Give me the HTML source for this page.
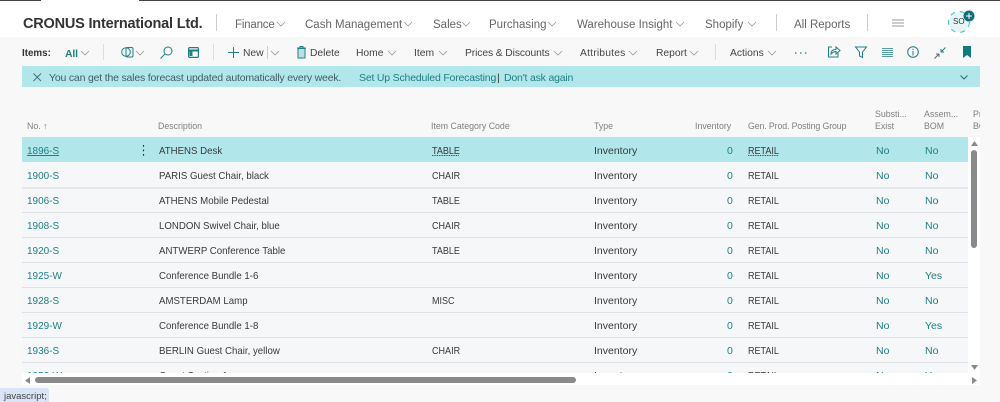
<!DOCTYPE html>
<html><head><meta charset="utf-8"><style>
html,body{margin:0;padding:0;width:1000px;height:402px;overflow:hidden;background:#f8f8f9}
body{position:relative;font-family:"Liberation Sans",sans-serif;font-size:10.5px;color:#3b3a39;filter:blur(.25px)}
.t{position:absolute;white-space:nowrap;line-height:14px;height:14px;margin-top:1px}
.a{position:absolute}
.a .t{margin-top:0}
#rows .t{margin-top:1px}
.g{color:#1f7f82}
.h{color:#808080;font-size:8.8px;margin-top:0}
.n{color:#666;font-size:11.5px}
.b{color:#444;font-size:10.3px}
.k{letter-spacing:-.19px;font-size:10.5px}
.l{position:absolute;left:22px;width:946px;height:1px;background:#dfe1e5}
svg.a{overflow:visible;fill:none}
#tb{position:absolute;left:22px;top:137px;width:946px;height:236px;overflow:hidden;background:#f6f7f9}
#rows{position:absolute;left:-22px;top:-137px;width:1000px;height:402px}
#rows .t[style*="left:159px"]{transform:scaleX(.92);transform-origin:0 50%}
#rows .t[style*="left:432px"],#rows .t[style*="left:748px"]{transform:scaleX(.86);transform-origin:0 50%}
#rows .t[style*="left:27px"]{transform:scaleX(.95);transform-origin:0 50%}
</style></head><body>
<svg width="0" height="0" style="position:absolute"><defs><polyline id="c" points="0,0 4,4 8,0" fill="none" stroke="#9a9a9a" stroke-width=".8"/></defs></svg>

<div class="a" style="left:0;top:0;width:1000px;height:37px;background:#fff"></div>
<div class="a" style="left:0;top:0;width:41px;height:1px;background:#444"></div>
<div class="a" style="left:139px;top:0;width:861px;height:1px;background:#444"></div>

<div class="t" style="left:23px;top:16px;font-size:14.5px;font-weight:bold;color:#333;letter-spacing:-.2px">CRONUS International Ltd.</div>
<div class="a" style="left:216px;top:14px;width:1px;height:17px;background:#ccc"></div>
<div class="t n" style="left:235px;top:17px;letter-spacing:-.2px">Finance</div><svg class="a" style="left:277px;top:22px" width="9" height="5"><use href="#c"/></svg>
<div class="t n" style="left:305px;top:17px">Cash Management</div><svg class="a" style="left:404px;top:22px" width="9" height="5"><use href="#c"/></svg>
<div class="t n" style="left:433px;top:17px">Sales</div><svg class="a" style="left:462px;top:22px" width="9" height="5"><use href="#c"/></svg>
<div class="t n" style="left:489px;top:17px">Purchasing</div><svg class="a" style="left:548px;top:22px" width="9" height="5"><use href="#c"/></svg>
<div class="t n" style="left:577px;top:17px">Warehouse Insight</div><svg class="a" style="left:676px;top:22px" width="9" height="5"><use href="#c"/></svg>
<div class="t n" style="left:705px;top:17px">Shopify</div><svg class="a" style="left:748px;top:22px" width="9" height="5"><use href="#c"/></svg>
<div class="a" style="left:776px;top:14px;width:1px;height:17px;background:#ccc"></div>
<div class="t n" style="left:794px;top:17px">All Reports</div>
<div class="a" style="left:867px;top:14px;width:1px;height:17px;background:#ccc"></div>
<svg class="a" style="left:892px;top:19px" width="12" height="9"><path d="M0 1H12M0 4H12M0 7H12" stroke="#999" stroke-width="1"/></svg>
<svg class="a" style="left:947px;top:10px" width="30" height="24">
<circle cx="12" cy="12" r="10" fill="#e6f5f5"/>
<circle cx="12" cy="12" r="10.5" stroke="#5fc4c4" stroke-width="1.2" stroke-dasharray="5 5"/>
<circle cx="22" cy="6" r="5.5" fill="#0f6e78"/>
<path d="M19 6H25M22 3V9" stroke="#fff" stroke-width="1"/>
</svg>
<div class="t" style="left:953px;top:14px;font-size:8px;color:#333">SO</div>

<div class="t b" style="left:22px;top:46px;font-weight:bold;font-size:9.8px;color:#333">Items:</div>
<div class="t g" style="left:65px;top:46px;font-weight:bold;font-size:10.5px;letter-spacing:-.2px">All</div><svg class="a" style="left:81px;top:51px" width="9" height="5"><use href="#c"/></svg>
<div class="a" style="left:103px;top:44px;width:1px;height:16px;background:#ddd"></div>
<svg class="a" style="left:121px;top:46px" width="13" height="13" stroke="#1f7f82" stroke-width="1"><circle cx="5" cy="6" r="4.3"/><rect x="5" y="1.5" width="7" height="9.5" rx="1.5"/></svg>
<svg class="a" style="left:136px;top:51px" width="9" height="5"><use href="#c"/></svg>
<svg class="a" style="left:160px;top:46px" width="13" height="13" stroke="#1f7f82" stroke-width="1"><circle cx="8" cy="5" r="4"/><path d="M5 8L.5 12.5"/></svg>
<svg class="a" style="left:188px;top:47px" width="11" height="11" stroke="#1f7f82" stroke-width="1.2"><rect x=".6" y=".6" width="9.8" height="9.8" rx="1"/><path d="M.6 3.5H10.4" stroke-width="2"/><rect x="1.5" y="4" width="3" height="5" fill="#1f7f82" stroke="none"/></svg>
<div class="a" style="left:213px;top:44px;width:1px;height:16px;background:#ddd"></div>
<svg class="a" style="left:228px;top:47px" width="11" height="11"><path d="M5.5 0V11M0 5.5H11" stroke="#1f7f82" stroke-width="1"/></svg>
<div class="t b" style="left:243px;top:46px">New</div>
<div class="a" style="left:267px;top:46px;width:1px;height:13px;background:#ccc"></div>
<svg class="a" style="left:271px;top:51px" width="9" height="5"><use href="#c"/></svg>
<svg class="a" style="left:297px;top:46px" width="10" height="13" stroke="#1f7f82" stroke-width="1"><rect x="1" y="2.5" width="7" height="9.5" fill="#bfe0e0"/><path d="M0 2H9M3 2V.5H6V2"/></svg>
<div class="t b" style="left:310px;top:46px">Delete</div>
<div class="t b" style="left:356px;top:46px">Home</div><svg class="a" style="left:388px;top:51px" width="9" height="5"><use href="#c"/></svg>
<div class="t b" style="left:414px;top:46px">Item</div><svg class="a" style="left:439px;top:51px" width="9" height="5"><use href="#c"/></svg>
<div class="t b" style="left:465px;top:46px;letter-spacing:-.1px">Prices &amp; Discounts</div><svg class="a" style="left:554px;top:51px" width="9" height="5"><use href="#c"/></svg>
<div class="t b" style="left:580px;top:46px;letter-spacing:.2px">Attributes</div><svg class="a" style="left:629px;top:51px" width="9" height="5"><use href="#c"/></svg>
<div class="t b" style="left:656px;top:46px">Report</div><svg class="a" style="left:690px;top:51px" width="9" height="5"><use href="#c"/></svg>
<div class="a" style="left:715px;top:44px;width:1px;height:16px;background:#ddd"></div>
<div class="t b" style="left:730px;top:46px">Actions</div><svg class="a" style="left:768px;top:51px" width="9" height="5"><use href="#c"/></svg>
<svg class="a" style="left:795px;top:52px" width="11" height="2"><path d="M0 1H1.5M5 1H6.5M10 1H11.500" stroke="#1f7f82" stroke-width="1.2"/></svg>
<svg class="a" style="left:828px;top:46px" width="12" height="12" stroke="#1f7f82" stroke-width="1"><path d="M4 1H.5V11H10V7"/><path d="M3 8C3 5 5 3.500 8 3.500V1L12 4.500L8 8V5.500C6 5.500 4.500 6.500 3 8Z"/></svg>
<svg class="a" style="left:855px;top:46px" width="12" height="12" stroke="#1f7f82" stroke-width="1"><path d="M.5 1H11.500L7.500 6V11.500L4.500 10V6Z"/></svg>
<svg class="a" style="left:882px;top:48px" width="11" height="9"><path d="M0 .5H11M0 2.500H11M0 4.500H11M0 6.500H11M0 8.500H11" stroke="#1f7f82" stroke-width=".8"/></svg>
<svg class="a" style="left:907px;top:46px" width="12" height="12" stroke="#1f7f82" stroke-width="1"><circle cx="6" cy="6" r="5.300"/><path d="M6 5V9.500M6 2.800V4"/></svg>
<svg class="a" style="left:934px;top:47px" width="12" height="12" stroke-width="1"><path d="M11.500 .5L7 5M7 2V5H10" stroke="#1f7f82"/><path d="M.5 11.500L5 7M2 7H5V10" stroke="#666"/></svg>
<svg class="a" style="left:963px;top:46px" width="8" height="12"><path d="M0 0H8V12L4 9L0 12Z" fill="#0f7b7f"/></svg>

<div class="a" style="left:22px;top:66px;width:958px;height:21px;background:#b1e6eb"></div>
<svg class="a" style="left:33px;top:73px" width="9" height="9"><path d="M.5 .5L8 8M8 .5L.5 8" stroke="#4a6a70" stroke-width=".9"/></svg>
<div class="t k" style="left:49px;top:70px;color:#3f5f63">You can get the sales forecast updated automatically every week.</div>
<div class="t g k" style="left:359px;top:70px">Set Up Scheduled Forecasting</div>
<div class="t" style="left:497px;top:70px;color:#333">|</div>
<div class="t g k" style="left:504px;top:70px">Don't ask again</div>
<svg class="a" style="left:960px;top:75px" width="8" height="5"><polyline points=".5,.5 4,4 7.500,.5" stroke="#2a6a70" stroke-width="1"/></svg>

<div class="t h" style="left:27px;top:119px">No. <span style="font-size:9px">↑</span></div>
<div class="t h" style="left:158px;top:119px">Description</div>
<div class="t h" style="left:431px;top:119px">Item Category Code</div>
<div class="t h" style="left:594px;top:119px">Type</div>
<div class="t h" style="left:695px;top:119px">Inventory</div>
<div class="t h" style="left:748px;top:119px;letter-spacing:-.12px">Gen. Prod. Posting Group</div>
<div class="t h" style="left:875px;top:107px">Substi...</div>
<div class="t h" style="left:875px;top:119px">Exist</div>
<div class="t h" style="left:924px;top:107px">Assem...</div>
<div class="t h" style="left:924px;top:119px">BOM</div>
<div class="a" style="left:972px;top:107px;width:8px;height:26px;overflow:hidden"><div class="t h" style="left:1px;top:0">Pr</div><div class="t h" style="left:1px;top:12px">BC</div></div>

<div id="tb"><div id="rows">
<div class="a" style="left:22px;top:137px;width:946px;height:25px;background:#b1e6eb"></div>
<div class="l" style="top:187px;background:#e4e6e9;height:2px"></div>
<div class="l" style="top:212px"></div><div class="l" style="top:237px"></div><div class="l" style="top:262px"></div><div class="l" style="top:287px"></div><div class="l" style="top:312px"></div><div class="l" style="top:337px"></div><div class="l" style="top:362px"></div>

<div class="t g" style="left:27px;top:143px;text-decoration:underline">1896-S</div>
<svg class="a" style="left:142px;top:145px" width="3" height="11"><path d="M1.500 0V1.800M1.500 4.500V6.300M1.500 9V10.800" stroke="#333" stroke-width="1.200"/></svg>
<div class="t" style="left:159px;top:143px">ATHENS Desk</div><div class="t" style="left:432px;top:143px;text-decoration:underline dotted #333">TABLE</div><div class="t" style="left:594px;top:143px">Inventory</div><div class="t g" style="left:727px;top:143px">0</div><div class="t" style="left:748px;top:143px;text-decoration:underline dotted #333">RETAIL</div><div class="t g" style="left:876px;top:143px">No</div><div class="t g" style="left:925px;top:143px">No</div>

<div class="t g" style="left:27px;top:168px">1900-S</div><div class="t" style="left:159px;top:168px">PARIS Guest Chair, black</div><div class="t" style="left:432px;top:168px">CHAIR</div><div class="t" style="left:594px;top:168px">Inventory</div><div class="t g" style="left:727px;top:168px">0</div><div class="t" style="left:748px;top:168px">RETAIL</div><div class="t g" style="left:876px;top:168px">No</div><div class="t g" style="left:925px;top:168px">No</div>

<div class="t g" style="left:27px;top:193px">1906-S</div><div class="t" style="left:159px;top:193px">ATHENS Mobile Pedestal</div><div class="t" style="left:432px;top:193px">TABLE</div><div class="t" style="left:594px;top:193px">Inventory</div><div class="t g" style="left:727px;top:193px">0</div><div class="t" style="left:748px;top:193px">RETAIL</div><div class="t g" style="left:876px;top:193px">No</div><div class="t g" style="left:925px;top:193px">No</div>

<div class="t g" style="left:27px;top:218px">1908-S</div><div class="t" style="left:159px;top:218px">LONDON Swivel Chair, blue</div><div class="t" style="left:432px;top:218px">CHAIR</div><div class="t" style="left:594px;top:218px">Inventory</div><div class="t g" style="left:727px;top:218px">0</div><div class="t" style="left:748px;top:218px">RETAIL</div><div class="t g" style="left:876px;top:218px">No</div><div class="t g" style="left:925px;top:218px">No</div>

<div class="t g" style="left:27px;top:243px">1920-S</div><div class="t" style="left:159px;top:243px">ANTWERP Conference Table</div><div class="t" style="left:432px;top:243px">TABLE</div><div class="t" style="left:594px;top:243px">Inventory</div><div class="t g" style="left:727px;top:243px">0</div><div class="t" style="left:748px;top:243px">RETAIL</div><div class="t g" style="left:876px;top:243px">No</div><div class="t g" style="left:925px;top:243px">No</div>

<div class="t g" style="left:27px;top:268px">1925-W</div><div class="t" style="left:159px;top:268px">Conference Bundle 1-6</div><div class="t" style="left:594px;top:268px">Inventory</div><div class="t g" style="left:727px;top:268px">0</div><div class="t" style="left:748px;top:268px">RETAIL</div><div class="t g" style="left:876px;top:268px">No</div><div class="t g" style="left:925px;top:268px">Yes</div>

<div class="t g" style="left:27px;top:293px">1928-S</div><div class="t" style="left:159px;top:293px">AMSTERDAM Lamp</div><div class="t" style="left:432px;top:293px">MISC</div><div class="t" style="left:594px;top:293px">Inventory</div><div class="t g" style="left:727px;top:293px">0</div><div class="t" style="left:748px;top:293px">RETAIL</div><div class="t g" style="left:876px;top:293px">No</div><div class="t g" style="left:925px;top:293px">No</div>

<div class="t g" style="left:27px;top:318px">1929-W</div><div class="t" style="left:159px;top:318px">Conference Bundle 1-8</div><div class="t" style="left:594px;top:318px">Inventory</div><div class="t g" style="left:727px;top:318px">0</div><div class="t" style="left:748px;top:318px">RETAIL</div><div class="t g" style="left:876px;top:318px">No</div><div class="t g" style="left:925px;top:318px">Yes</div>

<div class="t g" style="left:27px;top:343px">1936-S</div><div class="t" style="left:159px;top:343px">BERLIN Guest Chair, yellow</div><div class="t" style="left:432px;top:343px">CHAIR</div><div class="t" style="left:594px;top:343px">Inventory</div><div class="t g" style="left:727px;top:343px">0</div><div class="t" style="left:748px;top:343px">RETAIL</div><div class="t g" style="left:876px;top:343px">No</div><div class="t g" style="left:925px;top:343px">No</div>

<div class="t g" style="left:27px;top:368px">1953-W</div><div class="t" style="left:159px;top:368px">Guest Section 1</div><div class="t" style="left:594px;top:368px">Inventory</div><div class="t g" style="left:727px;top:368px">0</div><div class="t" style="left:748px;top:368px">RETAIL</div><div class="t g" style="left:876px;top:368px">No</div><div class="t g" style="left:925px;top:368px">Yes</div>
</div></div>

<div class="a" style="left:968px;top:137px;width:12px;height:248px;background:#fff"></div>
<div class="a" style="left:22px;top:373px;width:958px;height:12px;background:#fff"></div>
<svg class="a" style="left:971px;top:141px" width="7" height="5"><path d="M3.500 0L7 5H0Z" fill="#8a8a8a"/></svg>
<div class="a" style="left:971px;top:150px;width:6px;height:98px;background:#8a8a8a;border-radius:3px"></div>
<svg class="a" style="left:971px;top:365px" width="7" height="5"><path d="M3.500 5L7 0H0Z" fill="#8a8a8a"/></svg>
<svg class="a" style="left:25px;top:377px" width="5" height="7"><path d="M0 3.500L5 0V7Z" fill="#8a8a8a"/></svg>
<div class="a" style="left:35px;top:377px;width:541px;height:6px;background:#8a8a8a;border-radius:3px"></div>
<svg class="a" style="left:972px;top:377px" width="5" height="7"><path d="M5 3.500L0 0V7Z" fill="#8a8a8a"/></svg>

<div class="a" style="left:0;top:388px;width:49px;height:14px;background:#d9e5f7;border-radius:0 3px 0 0"></div>
<div class="t" style="left:4px;top:389px;font-size:9.500px;color:#444">javascript;</div>
</body></html>
